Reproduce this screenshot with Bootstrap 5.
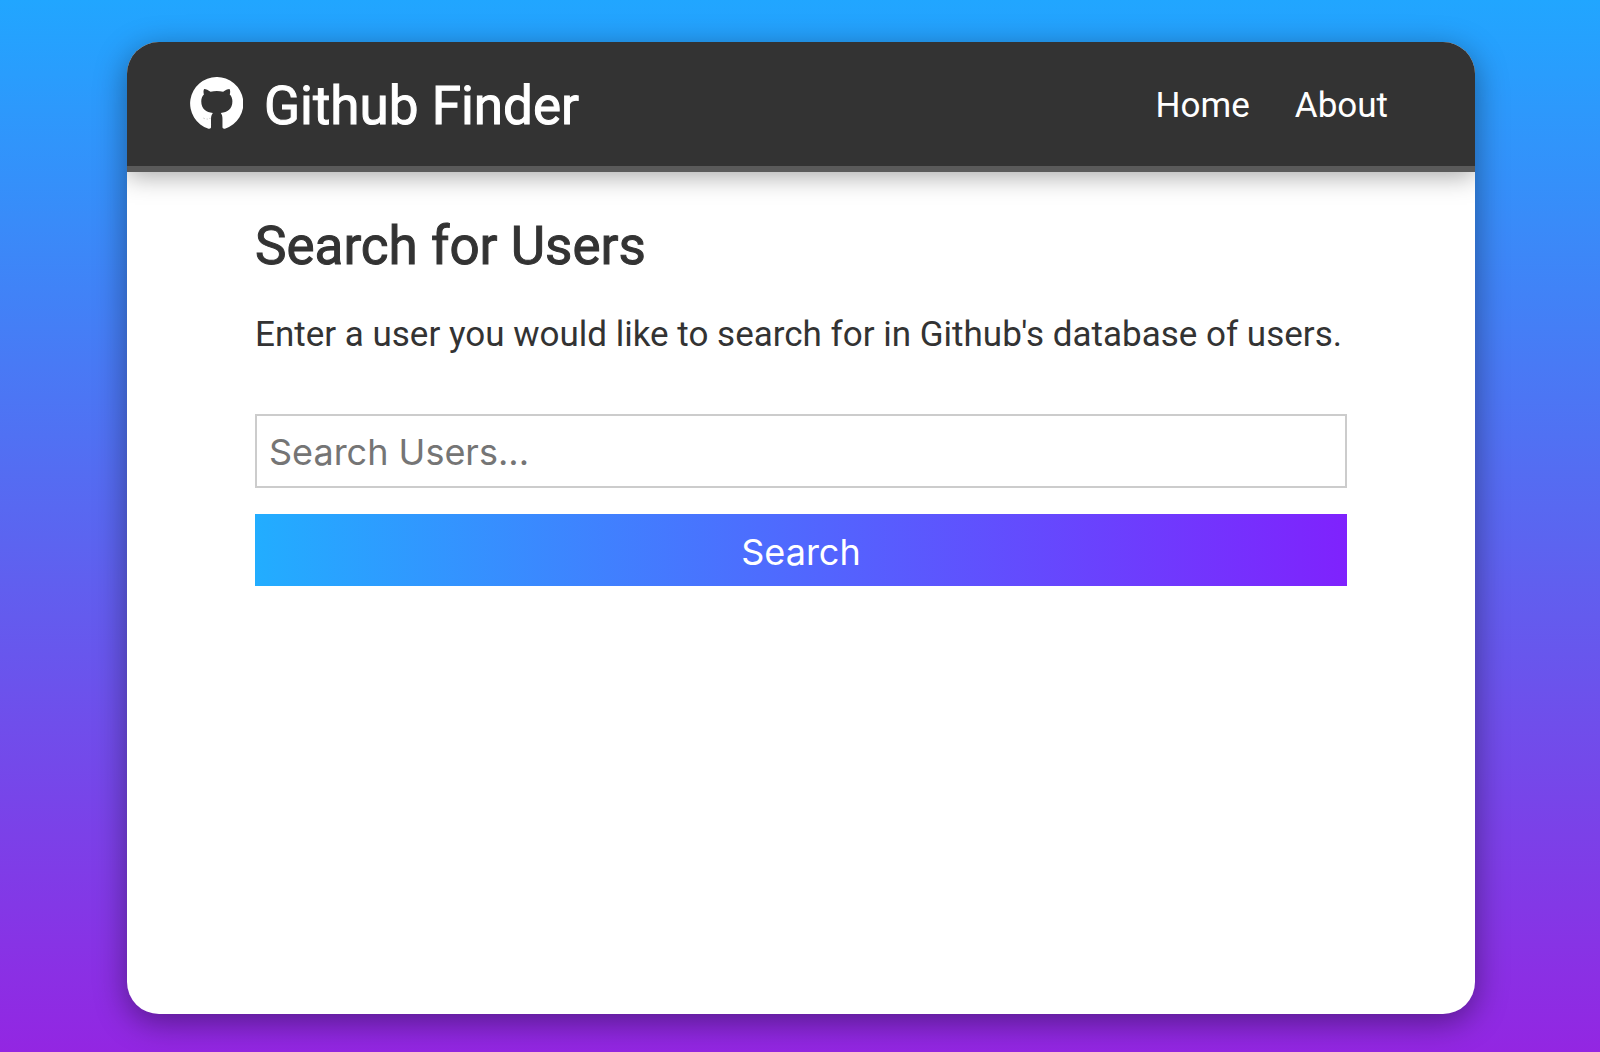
<!DOCTYPE html>
<html lang="en">
<head>
<meta charset="utf-8">
<meta name="viewport" content="width=device-width, initial-scale=1">
<title>Github Finder</title>
<link href="https://cdn.jsdelivr.net/npm/bootstrap@5.3.0/dist/css/bootstrap.min.css" rel="stylesheet">
<style>
  body {
    font-family: Roboto, sans-serif;
    font-size: 35px;
    line-height: 46px;
    color: #333;
    padding: 42px 125px 38px 127px;
    background: linear-gradient(#21a6ff, #9326e2) no-repeat fixed;
  }
  .app-panel {
    border-radius: 32px;
    box-shadow: 0 8px 32px rgba(0, 0, 0, .4);
  }
  .app-header {
    background: #333;
    border-bottom: 6px solid #5a5a5a;
    box-shadow: 0 4px 24px rgba(0, 0, 0, .35);
    padding: 34px 87px 30px 63px;
  }
  .app-logo { width: 53px; height: 53px; margin-top: -5px; }
  .app-title, .page-title {
    font-size: 53px;
    line-height: 60px;
    font-weight: 400;
    -webkit-text-stroke: 1px currentColor;
  }
  .app-brand { gap: 21px; }
  .app-nav { gap: 45px; }
  .app-main { padding: 44px 128px; }
  .page-title { margin-bottom: 36px; }
  .intro { margin-bottom: 56px; }
  .search-form { gap: 26px; font-family: Inter, sans-serif; }
  .search-form .form-control {
    border: 2px solid #ccc;
    padding: 12px 12px 10px;
    font-size: 36px;
    line-height: 48px;
  }
  .search-form .form-control::placeholder { color: #757575; }
  .search-form .btn {
    border: 0;
    padding: 14px 12px 10px;
    font-size: 36px;
    line-height: 48px;
    background: linear-gradient(90deg, #22adff, #7f22fd);
  }
</style>
</head>
<body class="d-flex flex-column min-vh-100">
<div class="app-panel bg-white overflow-hidden flex-grow-1">
  <header class="app-header d-flex flex-wrap justify-content-between align-items-center">
    <a href="#" class="app-brand d-flex align-items-center text-white text-decoration-none">
      <svg class="app-logo" viewBox="0 0 16 16" fill="currentColor" aria-hidden="true"><path d="M8 0a8 8 0 0 0-2.4 15.62c.45.1.75-.1.75-.5V12.6c0-.75.2-1.3.55-1.75C4.9 10.6 3.4 9.7 3.4 7.3c0-.9.3-1.55.8-2.05-.1-.4-.25-1 .05-1.65.6 0 1.3.35 1.95.85C7.4 4.2 8.8 4.2 10 4.45c.65-.5 1.3-.85 1.95-.85.3.65.15 1.25.05 1.65.5.5.8 1.15.8 2.05 0 2.4-1.5 3.3-3.5 3.55.35.45.5 1 .5 1.75v2.52c0 .4.3.6.75.5A8 8 0 0 0 8 0z"/><path d="M4 12.4l.5.2M5 12.7h.4M5.8 12.5h.4" fill="none" stroke="#999" stroke-width=".15"/></svg>
      <span class="app-title">Github Finder</span>
    </a>
    <nav class="app-nav d-flex">
      <a href="#" class="text-white text-decoration-none">Home</a>
      <a href="#" class="text-white text-decoration-none">About</a>
    </nav>
  </header>
  <main class="app-main">
    <h1 class="page-title">Search for Users</h1>
    <p class="intro">Enter a user you would like to search for in Github's database of users.</p>
    <form class="search-form d-flex flex-column">
      <input type="text" class="form-control rounded-0" placeholder="Search Users..." aria-label="Search Users">
      <button type="button" class="btn rounded-0 text-white w-100">Search</button>
    </form>
  </main>
</div>
<script src="https://cdn.jsdelivr.net/npm/bootstrap@5.3.0/dist/js/bootstrap.bundle.min.js"></script>
</body>
</html>
